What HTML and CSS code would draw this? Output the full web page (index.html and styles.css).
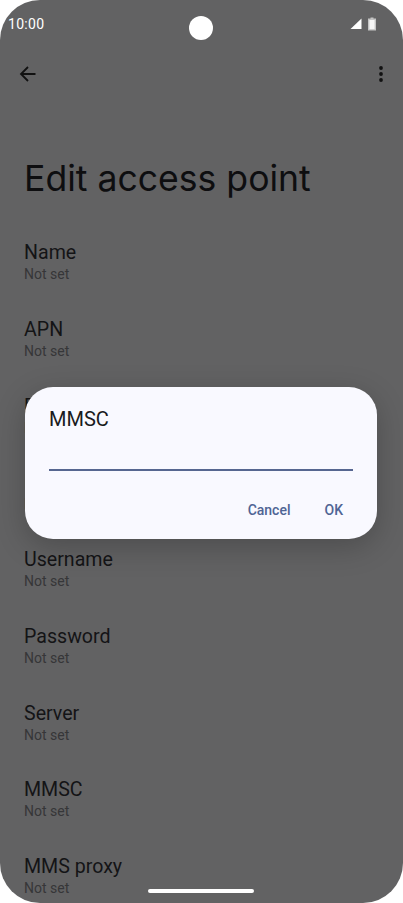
FILE: index.html
```html
<!DOCTYPE html>
<html lang="en">
<head>
<meta charset="utf-8">
<title>Edit access point</title>
<link rel="stylesheet" href="styles.css">
</head>
<body>
<div class="screen">
  <div class="status">
    <span class="time">10:00</span>
    <span class="camera"></span>
    <span class="status-icons">
      <svg class="signal" width="12" height="12" viewBox="0 0 12 12"><path d="M0.5 11 11.5 0.5V11Z" fill="#fff"/></svg>
      <svg class="battery" width="8" height="14" viewBox="0 0 8 14"><path d="M2.5 0.5H5.5V1.5H8V13.5H0V1.5H2.5Z" fill="#c4c4c4"/><rect x="1.4" y="3" width="5.2" height="9.2" fill="#f6f6f6"/></svg>
    </span>
  </div>
  <div class="toolbar">
    <svg class="back" width="18" height="18" viewBox="0 0 18 18"><path d="M16.5 9H2M9 2 2 9l7 7" fill="none" stroke="#111" stroke-width="1.8"/></svg>
    <svg class="more" width="4" height="16" viewBox="0 0 4 16"><circle cx="2" cy="2" r="1.9" fill="#111"/><circle cx="2" cy="8" r="1.9" fill="#111"/><circle cx="2" cy="14" r="1.9" fill="#111"/></svg>
  </div>
  <h1 class="title">Edit access point</h1>
  <ul class="list">
    <li class="row"><span class="label">Name</span><span class="value">Not set</span></li>
    <li class="row"><span class="label">APN</span><span class="value">Not set</span></li>
    <li class="row"><span class="label">Proxy</span><span class="value">Not set</span></li>
    <li class="row"><span class="label">Port</span><span class="value">Not set</span></li>
    <li class="row"><span class="label">Username</span><span class="value">Not set</span></li>
    <li class="row"><span class="label">Password</span><span class="value">Not set</span></li>
    <li class="row"><span class="label">Server</span><span class="value">Not set</span></li>
    <li class="row"><span class="label">MMSC</span><span class="value">Not set</span></li>
    <li class="row"><span class="label">MMS proxy</span><span class="value">Not set</span></li>
  </ul>
  <div class="dialog">
    <div class="dialog-title">MMSC</div>
    <div class="field"></div>
    <div class="actions">
      <span class="action">Cancel</span>
      <span class="action">OK</span>
    </div>
  </div>
  <div class="home"></div>
</div>
</body>
</html>
```
FILE: styles.css
```css
* { box-sizing: border-box; }
html, body { margin: 0; padding: 0; background: #fff; }
body { width: 403px; height: 903px; overflow: hidden; font-family: Roboto, "Liberation Sans", sans-serif; }
.screen { position: relative; width: 403px; height: 903px; background: #626263; border-radius: 40px; overflow: hidden; }
.status { display: flex; align-items: center; justify-content: space-between; padding: 10px 27px 0 8px; height: 38px; position: relative; }
.time { color: #fff; font-size: 14px; font-weight: 400; line-height: 28px; letter-spacing: 0.3px; }
.camera { position: absolute; left: 189px; top: 16px; width: 24px; height: 24px; border-radius: 50%; background: #fff; }
.status-icons { display: flex; align-items: center; gap: 6px; }
.toolbar { display: flex; align-items: center; justify-content: space-between; padding: 0 20px 0 19px; margin-top: 27px; height: 18px; }
.title { margin: 74px 0 0 24px; font-family: Inter, Roboto, sans-serif; font-size: 35.6px; font-weight: 400; line-height: 44px; color: #0e0e10; }
.list { list-style: none; margin: 40px 0 0; padding: 0 0 0 24px; }
.row { display: flex; flex-direction: column; height: 76.75px; }
.label { font-size: 19.6px; line-height: 23px; color: #141416; }
.value { font-size: 14px; line-height: 20px; color: #363638; }
.dialog { position: absolute; left: 25px; top: 387px; width: 352px; height: 152px; background: #f9f9ff; border-radius: 28px; box-shadow: 0 8px 30px rgba(0,0,0,0.22); padding: 20px 24px 0; }
.dialog-title { font-size: 20px; line-height: 24px; font-weight: 400; color: #1a1b20; }
.field { margin-top: 38px; height: 2px; background: #566690; }
.actions { display: flex; justify-content: flex-end; gap: 34px; margin-top: 29px; padding-right: 10px; }
.action { font-size: 14px; line-height: 20px; font-weight: 500; color: #4f6494; }
.home { position: absolute; left: 148px; top: 889px; width: 106px; height: 4px; border-radius: 2px; background: #fff; }
```
